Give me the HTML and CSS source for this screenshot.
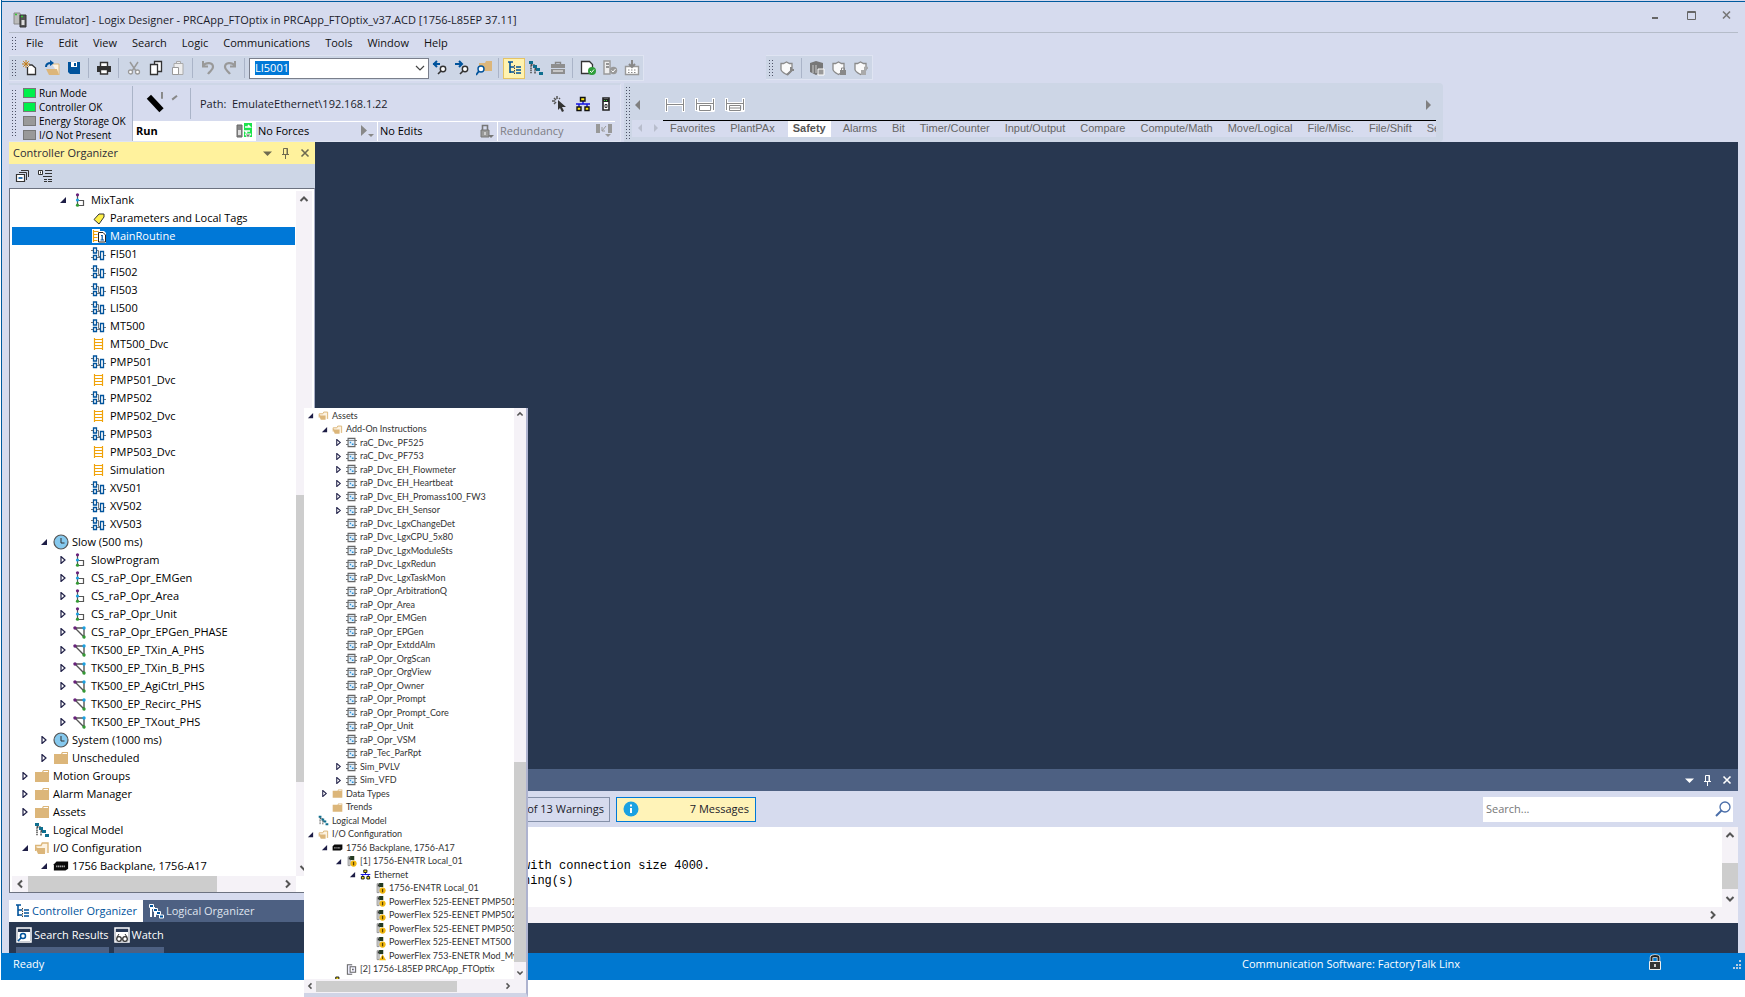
FILE: index.html
```html
<!DOCTYPE html>
<html lang="en">
<head>
<meta charset="utf-8">
<title>Logix Designer - PRCApp_FTOptix</title>
<link rel="stylesheet" href="styles.css">
</head>
<body>
<svg class="defs" aria-hidden="true">
  <symbol id="open" viewBox="0 0 8 8"><path d="M7 1v6H1z" fill="#1e1e46"/></symbol>
  <symbol id="shut" viewBox="0 0 8 8"><path d="M2 0.5v7L6 4z" fill="#fff" stroke="#1e1e46" stroke-width="1.2"/></symbol>
  <symbol id="prog" viewBox="0 0 16 16"><path d="M5.500 2v11M6 8.500h5.500v5H6" fill="none" stroke="#555" stroke-width="1.2"/><circle cx="5.500" cy="2.800" r="1.600" fill="#68217a"/><circle cx="5.500" cy="8" r="1.600" fill="#1ba1e2"/><circle cx="5.500" cy="13.200" r="1.600" fill="#339933"/></symbol>
  <symbol id="phase" viewBox="0 0 16 16"><path d="M3 4h9v9z" fill="none" stroke="#555" stroke-width="1.400"/><circle cx="3" cy="4" r="1.700" fill="#68217a"/><circle cx="12" cy="4" r="1.700" fill="#1ba1e2"/><circle cx="12" cy="13" r="1.700" fill="#339933"/></symbol>
  <symbol id="tag" viewBox="0 0 16 16"><path d="M3 9.500L8 4h5v3l-5 7z" fill="#fff04a" stroke="#333"/></symbol>
  <symbol id="fbd" viewBox="0 0 16 16"><path d="M0 4.500h2M0 11.500h2M6 4.500h1.500v6H9M6 11.500h3M13 9.500h2" stroke="#777" fill="none"/><path d="M2.500 2h3v5h-3zM2.500 9.500h3v4h-3zM9.500 5.500h3v8h-3z" fill="#fff" stroke="#00539c" stroke-width="1.300"/></symbol>
  <symbol id="lad" viewBox="0 0 16 16"><path d="M3.500 2v12M11.500 2v12M3.500 3.500h8M3.500 6.500h8M3.500 9.500h8M3.500 12.500h8" stroke="#f0a30a" fill="none" stroke-width="1.200"/></symbol>
  <symbol id="main" viewBox="0 0 16 16"><path d="M1 1h8v14H1zM7 3h6l2 2v10H7z" fill="#fff"/><path d="M2.500 2v12M2.500 3.500h5M2.500 6.500h4M2.500 9.500h4M2.500 12.500h4" stroke="#f0a30a" stroke-width="1.200"/><path d="M7.500 4.500h4.500l2.500 2.500v7h-7z" fill="#fff" stroke="#222"/><path d="M10 7.500h1.200V12M9.500 12h3.500" stroke="#00539c" fill="none" stroke-width="1.200"/></symbol>
  <symbol id="clock" viewBox="0 0 16 16"><circle cx="8" cy="8" r="7" fill="#86c9ee" stroke="#555" stroke-width="1.200"/><path d="M8 4v5h3.500" stroke="#333" fill="none"/></symbol>
  <symbol id="fold" viewBox="0 0 16 16"><path d="M1 4h7l1-2h6v12H1z" fill="#dcb67a"/><path d="M9.500 3.500h4.500" stroke="#fff"/></symbol>
  <symbol id="foldo" viewBox="0 0 16 16"><path d="M1.700 11V5.500H7l1.300-2.500H14V13" fill="#fdf3e2" stroke="#dcb67a" stroke-width="1.400"/><path d="M1 7l3 1h7v6H4z" fill="#dcb67a"/></symbol>
  <symbol id="model" viewBox="0 0 16 16"><path d="M3 3v11M3 5h4M7 7v7M7 9h4" stroke="#444" stroke-dasharray="1.500 .7" stroke-width="1.400" fill="none"/><path d="M1 1h4v3H1zM5 5h4v3H5zM8 8h4v3H8zM11 12h4v3h-4z" fill="#0f6f8f"/></symbol>
  <symbol id="modelw" viewBox="0 0 16 16"><path d="M3 3v11M3 5h4M7 7v7M7 9h4" stroke="#fff" stroke-width="2" fill="none"/><path d="M1.500 1.500h4v3h-4zM5.500 5.500h4v3h-4zM8.500 8.500h4v3h-4zM11.500 12h4v3h-4z" fill="#00539c" stroke="#fff"/></symbol>
  <symbol id="rack" viewBox="0 0 18 16"><path d="M4 3h13v8l-3 2H1V6z" fill="#0a0a0a"/><path d="M3.500 8.500h10" stroke="#aaa" stroke-width="2" stroke-dasharray="1.500 .6"/></symbol>
  <symbol id="aoi" viewBox="0 0 16 16"><path d="M0 5h16M0 11h16" stroke="#777" stroke-width="1.500"/><path d="M3 2h10v12H3z" fill="#e4f1fb" stroke="#666" stroke-width="1.600"/><path d="M3 5h10" stroke="#666"/><path d="M5.500 8h2M8.500 10.500h2.500" stroke="#2b8fd8" stroke-width="2"/></symbol>
  <symbol id="mod" viewBox="0 0 16 16"><path d="M3 1h3v13H3z" fill="#ddd" stroke="#777"/><path d="M6 0h6v6H6z" fill="#223a22"/><path d="M4 2h2v3H4z" fill="#333"/><circle cx="11" cy="11" r="4.500" fill="#f2b90f"/><path d="M11 8.500v5" stroke="#5b4300" stroke-width="1.800"/></symbol>
  <symbol id="modw" viewBox="0 0 16 16"><path d="M3 1h3v13H3z" fill="#ddd" stroke="#777"/><path d="M6 0h6v6H6z" fill="#223a22"/><path d="M4 2h2v3H4z" fill="#333"/><path d="M11 6l5 9H6z" fill="#f2b90f"/><path d="M11 9v4" stroke="#5b4300" stroke-width="1.500"/></symbol>
  <symbol id="cpu" viewBox="0 0 16 16"><path d="M9 1H2v14h7M6 4h8v8H6z" fill="#eef" stroke="#666" stroke-width="1.500"/><path d="M9 7h2v2H9z" fill="#444"/></symbol>
  <symbol id="net" viewBox="0 0 16 16"><path d="M8 5v3M1 8h14M4 8v3M12 8v3" stroke="#1414e0" stroke-width="1.400"/><path d="M5.500 1.500h4.500v3.500H5.500zM2 11h4v3.500H2zM10 11h4v3.500h-4z" fill="#ffe81a" stroke="#111" stroke-width="1.400"/></symbol>
  <symbol id="drop" viewBox="0 0 16 16"><path d="M4 6.500h9l-4.500 4.500z" fill="currentColor"/></symbol>
  <symbol id="pin" viewBox="0 0 16 16"><path d="M5.500 9V3.500h4V9M9 3v6M4 9.500h7M7.500 10v4" stroke="currentColor" fill="none"/></symbol>
  <symbol id="x" viewBox="0 0 16 16"><path d="M4.500 4.500l7 7M11.500 4.500l-7 7" stroke="currentColor" stroke-width="1.600"/></symbol>
  <symbol id="up" viewBox="0 0 16 16"><path d="M4.500 10L8 6.500l3.500 3.500" stroke="#555" fill="none" stroke-width="2"/></symbol>
  <symbol id="down" viewBox="0 0 16 16"><path d="M4.500 6L8 9.500 11.500 6" stroke="#555" fill="none" stroke-width="2"/></symbol>
  <symbol id="left" viewBox="0 0 16 16"><path d="M10 4.500L6.500 8l3.500 3.500" stroke="#555" fill="none" stroke-width="2"/></symbol>
  <symbol id="right" viewBox="0 0 16 16"><path d="M6 4.500L9.500 8 6 11.500" stroke="#555" fill="none" stroke-width="2"/></symbol>
  <symbol id="shield" viewBox="0 0 16 16"><path d="M2 3.500h2.500L7.500 2l3 1.500H13v6c0 2-3 3.500-5.500 5C5 13 2 11.500 2 9.500z" fill="#fafafa" stroke="#8a8a8a" stroke-width="1.300"/></symbol>
  <symbol id="ctree" viewBox="0 0 16 16"><path d="M2 2h5M4 2v11M4 7h4M4 12h4" stroke="#00539c" stroke-width="1.600" fill="none"/><path d="M8.500 5v9" stroke="#444" stroke-dasharray="1.500 1"/><path d="M10 7h5M10 10h5M10 13h5" stroke="#00539c" stroke-width="1.600"/></symbol>
</svg>

<div class="window">
  <header class="titlebar">
    <svg class="i16" viewBox="0 0 16 16"><path d="M2 1h6v11H2z" fill="#bbb" stroke="#888"/><path d="M8 3h6v12H8z" fill="#555" stroke="#333"/><path d="M9 4.500h2M3 2.500h2" stroke="#36c936" stroke-width="1.500"/><path d="M9.500 8h3v5h-3z" fill="#ddd"/></svg>
    <h1>[Emulator] - Logix Designer - PRCApp_FTOptix in PRCApp_FTOptix_v37.ACD [1756-L85EP 37.11]</h1>
    <div class="winbtns">
      <button aria-label="Minimize"><svg class="i16" viewBox="0 0 16 16"><path d="M5 11h6" stroke="#666" stroke-width="2"/></svg></button>
      <button aria-label="Maximize"><svg class="i16" viewBox="0 0 16 16"><path d="M4.500 4.500h8v8h-8zM4 5.500h9" stroke="#666" fill="none"/></svg></button>
      <button aria-label="Close"><svg class="i16" viewBox="0 0 16 16"><path d="M4 4.500l7 7M11 4.500l-7 7" stroke="#777" stroke-width="1.600"/></svg></button>
    </div>
  </header>

  <nav class="menubar"><span class="grip"></span>
    <button>File</button><button>Edit</button><button>View</button><button>Search</button><button>Logic</button><button>Communications</button><button>Tools</button><button>Window</button><button>Help</button>
  </nav>

  <div class="toolrow">
    <div class="toolbar">
      <span class="grip"></span>
      <button aria-label="New"><svg class="i16" viewBox="0 0 16 16"><path d="M5.500 7v7.500h8V8L10 5H7" fill="#fff" stroke="#333" stroke-width="1.300"/><path d="M4 0v8M0 4h8M1.200 1.200l5.600 5.600M6.800 1.200L1.200 6.800" stroke="#c27d1a"/></svg></button>
      <button aria-label="Open"><svg class="i16" viewBox="0 0 16 16"><path d="M8 4h7v11" fill="#fdf3e2" stroke="#dcb67a"/><path d="M2 9h3l1 0h7l2 6H5z" fill="#dcb67a"/><path d="M2 7c0-4 3-4 5-4" stroke="#00539c" stroke-width="2" fill="none"/><path d="M6 0l4 3-4 3z" fill="#00539c"/></svg></button>
      <button aria-label="Save"><svg class="i16" viewBox="0 0 16 16"><path d="M2 2h12v12H4l-2-2z" fill="#00539c"/><path d="M5 2h6v5H5z" fill="#fff"/><path d="M8 3h2v3H8z" fill="#00539c"/></svg></button>
      <span class="sep"></span>
      <button aria-label="Print"><svg class="i16" viewBox="0 0 16 16"><path d="M4.500 6V2.500h7V6" fill="#fff" stroke="#333" stroke-width="1.400"/><path d="M1 6h14v6H1z" fill="#333"/><path d="M4.500 9.500h7v4.500h-7z" fill="#fff" stroke="#333" stroke-width="1.400"/></svg></button>
      <span class="sep"></span>
      <button aria-label="Cut"><svg class="i16" viewBox="0 0 16 16"><path d="M4 2l6 9M12 2l-6 9" stroke="#999" stroke-width="1.500"/><circle cx="4.500" cy="12" r="2" fill="#fff" stroke="#999" stroke-width="1.300"/><circle cx="11.500" cy="12" r="2" fill="#fff" stroke="#999" stroke-width="1.300"/></svg></button>
      <button aria-label="Copy"><svg class="i16" viewBox="0 0 16 16"><path d="M6.500 1.500h7v10h-7z" fill="#fff" stroke="#333" stroke-width="1.300"/><path d="M2.500 4.500h7v10h-7z" fill="#fff" stroke="#333" stroke-width="1.300"/></svg></button>
      <button aria-label="Paste"><svg class="i16" viewBox="0 0 16 16"><path d="M4 3.500h9v11H4zM6.500 3V1.500h4V3" fill="#eee" stroke="#aaa"/><path d="M2.500 7.500h6v7h-6z" fill="#fff" stroke="#999"/></svg></button>
      <span class="sep"></span>
      <button aria-label="Undo"><svg class="i16" viewBox="0 0 16 16"><path d="M3 6c3-4 10-4 10 1 0 3-3 4-5 7" stroke="#999" stroke-width="2.200" fill="none"/><path d="M3 1v5.500h5" stroke="#999" stroke-width="2" fill="none"/></svg></button>
      <button aria-label="Redo"><svg class="i16" viewBox="0 0 16 16"><path d="M13 6C10 2 3 2 3 7c0 3 3 4 5 7" stroke="#999" stroke-width="2.200" fill="none"/><path d="M13 1v5.500H8" stroke="#999" stroke-width="2" fill="none"/></svg></button>
      <span class="sep"></span>
      <div class="combo"><span class="sel">LI5001</span><svg class="i16" viewBox="0 0 16 16"><path d="M4 6l4 4 4-4" stroke="#444" fill="none" stroke-width="1.200"/></svg></div>
      <button aria-label="Find previous"><svg class="i16" viewBox="0 0 16 16"><path d="M1 4h7M5 1L2 4l3 3" stroke="#00539c" stroke-width="2" fill="none"/><circle cx="11" cy="9" r="2.700" fill="#fff" stroke="#333" stroke-width="1.400"/><path d="M9 11l-3 3" stroke="#333" stroke-width="1.600"/></svg></button>
      <button aria-label="Find next"><svg class="i16" viewBox="0 0 16 16"><path d="M1 4h7M5 1l3 3-3 3" stroke="#00539c" stroke-width="2" fill="none"/><circle cx="11" cy="9" r="2.700" fill="#fff" stroke="#333" stroke-width="1.400"/><path d="M9 11l-3 3" stroke="#333" stroke-width="1.600"/></svg></button>
      <button aria-label="Browse"><svg class="i16" viewBox="0 0 16 16"><path d="M3 3h6l1-2h6v10H3z" fill="#dcb67a"/><circle cx="5" cy="9" r="3" fill="#fff" stroke="#00539c" stroke-width="1.400"/><path d="M3 11l-3 4" stroke="#00539c" stroke-width="1.800"/></svg></button>
      <span class="sep"></span>
      <button class="on" aria-label="Controller Organizer"><svg class="i16"><use href="#ctree"/></svg></button>
      <button aria-label="Logical Organizer"><svg class="i16"><use href="#model"/></svg></button>
      <button aria-label="Toolbox"><svg class="i16" viewBox="0 0 16 16"><path d="M5.500 4V2.500h5V4" fill="none" stroke="#888" stroke-width="1.400"/><path d="M1 4h14v4H1zM1 9h14v5H1z" fill="#8e8e8e"/><path d="M3 11h10" stroke="#fff"/></svg></button>
      <span class="sep"></span>
      <button aria-label="Verify"><svg class="i16" viewBox="0 0 16 16"><path d="M1.500 1.500h8l3 3v9h-11z" fill="#fff" stroke="#333" stroke-width="1.300"/><circle cx="12" cy="11" r="4" fill="#2f9e3a"/><path d="M10 11l1.500 1.500L14 9.500" stroke="#fff" fill="none"/></svg></button>
      <button aria-label="Verify controller"><svg class="i16" viewBox="0 0 16 16"><path d="M2 1h6v13H2z" fill="#eee" stroke="#999" stroke-width="1.400"/><path d="M4 4h3M4 7h3" stroke="#777" stroke-width="1.500"/><circle cx="11.500" cy="10.500" r="3.700" fill="#999"/><path d="M9.500 10.500l1.500 1.500 2.500-3" stroke="#fff" fill="none"/></svg></button>
      <button aria-label="Build"><svg class="i16" viewBox="0 0 16 16"><path d="M1.500 6.500h13v8h-13z" fill="#fff" stroke="#999" stroke-width="1.400"/><path d="M8 0v7M5 4l3 3 3-3" stroke="#888" stroke-width="2" fill="none"/><path d="M4 10h8M4 12.500h8" stroke="#888" stroke-dasharray="1.500 1.500"/></svg></button>
    </div>
    <div class="toolbar safety">
      <span class="grip"></span>
      <button aria-label="Safety configure"><svg class="i16"><use href="#shield"/><path d="M8 15l5-5M12 7v3h3" stroke="#888" stroke-width="2" fill="none"/></svg></button>
      <span class="sep"></span>
      <button aria-label="Safety signature"><svg class="i16"><path d="M1 3l6-2 7 2v9l-7 3-6-3z" fill="#777"/><path d="M4 5v8M7 5v8" stroke="#ccc"/><path d="M9 9h6v6H9z" fill="#999" stroke="#fff"/></svg></button>
      <button aria-label="Safety lock"><svg class="i16"><use href="#shield"/><path d="M10.500 10V8h3v2" fill="none" stroke="#888"/><path d="M9 10h6v5H9z" fill="#888"/></svg></button>
      <button aria-label="Safety unlock"><svg class="i16"><use href="#shield"/><path d="M11.500 10V7h3v2" fill="none" stroke="#aaa"/><path d="M8 10h5v5H8z" fill="#aaa"/></svg></button>
    </div>
  </div>

  <div class="statusrow">
    <section class="online">
      <span class="grip"></span>
      <ul class="leds"><li class="g">Run Mode</li><li class="g">Controller OK</li><li>Energy Storage OK</li><li>I/O Not Present</li></ul>
      <div class="path-area">
        <div class="path-top">
          <svg class="key" viewBox="0 0 54 32"><path d="M14 9l13 14" stroke="#000" stroke-width="6"/><path d="M27.500 4v7" stroke="#888" stroke-width="2"/><path d="M38 12l5-4" stroke="#888" stroke-width="2"/></svg>
          <span class="path">Path: &nbsp;EmulateEthernet\192.168.1.22</span>
          <button aria-label="Who Active"><svg class="i16" viewBox="0 0 16 16"><path d="M6 4l8 7H10l2 4-2 1-2-4-2 2z" fill="#333"/><path d="M5 0v3M0 5h3M2 2l2 2M8 2L7 3M2 8l2-2" stroke="#555" stroke-width="1.500"/></svg></button>
          <button aria-label="Network"><svg class="i16"><use href="#net"/></svg></button>
          <button aria-label="Module"><svg class="i16" viewBox="0 0 16 16"><path d="M5 2h6v12H5z" fill="#fff" stroke="#222" stroke-width="1.600"/><path d="M5 3h6v3H5z" fill="#222"/><path d="M6 4.500h4" stroke="#35d435" stroke-dasharray="1 1"/><path d="M7 8.500h2v3H7z" fill="#fff" stroke="#333"/></svg></button>
        </div>
        <div class="cells">
          <div class="cell run"><b>Run</b><svg class="i16" viewBox="0 0 16 16"><path d="M1 2h5v12H1z" fill="#888" stroke="#666"/><path d="M2 7h3v5H2z" fill="#ddd"/><path d="M8 0h8v14H8z" fill="#1ce34c"/><path d="M9 4h5l-2-2M14 8H9l2 2" stroke="#fff" stroke-width="1.500" fill="none"/><path d="M9 11h6l-3 4z" fill="#777" stroke="#fff"/></svg></div>
          <div class="cell">No Forces<svg class="i16" viewBox="0 0 16 16"><path d="M3 2v11l6-5.500z" fill="#888"/><path d="M10 11h6l-3 3z" fill="#888"/></svg></div>
          <div class="cell">No Edits<svg class="i16" viewBox="0 0 16 16"><path d="M4.500 7V2.500h5V7" fill="none" stroke="#777" stroke-width="1.600"/><path d="M3 7h8v7H3z" fill="#999" stroke="#777"/><path d="M7 9v3" stroke="#fff"/><path d="M10 12h6l-3 3z" fill="#777"/></svg></div>
          <div class="cell dim">Redundancy<svg class="i16" viewBox="0 0 16 16"><path d="M0 1h4v9H0zM12 1h4v9h-4z" fill="#999"/><path d="M6 8l4-5M6 4v4h3" stroke="#999" fill="none"/><path d="M9 11h6l-3 3z" fill="#999"/></svg></div>
        </div>
      </div>
    </section>
    <section class="palette">
      <span class="grip"></span>
      <div class="pal-main">
        <div class="pal-top">
          <svg class="i16" viewBox="0 0 16 16"><path d="M10 3v10L5 8z" fill="#808080"/></svg>
          <span class="instr">
            <svg viewBox="0 0 20 16"><path d="M1.500 1v14M18.500 1v14M2 7.500h16" stroke="#fff" stroke-width="3"/><path d="M1.500 2v12M18.500 2v12M2 7.500h16" stroke="#888"/></svg>
            <svg viewBox="0 0 20 16"><path d="M1.500 1v13M18.500 1v13M2 6.500h16v7H4V8" stroke="#fff" stroke-width="3" fill="none"/><path d="M1.500 2v11M18.500 2v11M2 6.500h16M4.500 8.500h11v5h-11z" stroke="#888" fill="#fff"/></svg>
            <svg viewBox="0 0 20 16"><path d="M1.500 1v13M18.500 1v13M2 6.500h16v7H4V8" stroke="#fff" stroke-width="3" fill="none"/><path d="M1.500 2v11M18.500 2v11M2 6.500h16M4.500 8.500h11v5h-11zM4 11h12" stroke="#888" fill="#fff"/></svg>
          </span>
          <svg class="i16" viewBox="0 0 16 16"><path d="M6 3v10l5-5z" fill="#808080"/></svg>
        </div>
        <div class="pal-tabs">
          <span class="arrows"><svg class="i16" viewBox="0 0 16 16"><path d="M10 4v8L6 8z" fill="#b8bdcc"/></svg><svg class="i16" viewBox="0 0 16 16"><path d="M6 4v8l4-4z" fill="#b8bdcc"/></svg></span>
          <div class="tabs"><button>Favorites</button><button>PlantPAx</button><button class="on">Safety</button><button>Alarms</button><button>Bit</button><button>Timer/Counter</button><button>Input/Output</button><button>Compare</button><button>Compute/Math</button><button>Move/Logical</button><button>File/Misc.</button><button>File/Shift</button><button class="last">Se</button></div>
        </div>
      </div>
    </section>
  </div>

  <main class="work">
    <aside class="organizer">
      <div class="org-head"><h2>Controller Organizer</h2><svg class="i16"><use href="#drop"/></svg><svg class="i16"><use href="#pin"/></svg><svg class="i16"><use href="#x"/></svg></div>
      <div class="org-tools">
        <button aria-label="Collapse all"><svg class="i16" viewBox="0 0 16 16"><path d="M6 2.500h7.500V9M4 4.500h7.500V12" stroke="#333" fill="none"/><path d="M1.500 6.500h8v7h-8z" fill="#fff" stroke="#333" stroke-width="1.200"/><path d="M3.500 10h4" stroke="#00539c" stroke-width="1.600"/></svg></button>
        <button aria-label="Properties"><svg class="i16" viewBox="0 0 16 16"><path d="M1.500 2.500h4v4h-4z" fill="#fff" stroke="#333"/><path d="M3.500 3.500v2" stroke="#333"/><path d="M8 2.500h7M8 5.500h7M6 8.500h9M7 11.500h3M7 13.500h3M11 11.500h4M11 13.500h4" stroke="#333"/></svg></button>
      </div>
      <div class="org-box">
        <div class="org-view">
          <ul class="tree">
            <li class="l3"><svg class="a"><use href="#open"/></svg><svg class="i"><use href="#prog"/></svg>MixTank</li>
            <li class="l4"><svg class="a"></svg><svg class="i"><use href="#tag"/></svg>Parameters and Local Tags</li>
            <li class="l4 sel"><svg class="a"></svg><svg class="i"><use href="#main"/></svg>MainRoutine</li>
            <li class="l4"><svg class="a"></svg><svg class="i"><use href="#fbd"/></svg>FI501</li>
            <li class="l4"><svg class="a"></svg><svg class="i"><use href="#fbd"/></svg>FI502</li>
            <li class="l4"><svg class="a"></svg><svg class="i"><use href="#fbd"/></svg>FI503</li>
            <li class="l4"><svg class="a"></svg><svg class="i"><use href="#fbd"/></svg>LI500</li>
            <li class="l4"><svg class="a"></svg><svg class="i"><use href="#fbd"/></svg>MT500</li>
            <li class="l4"><svg class="a"></svg><svg class="i"><use href="#lad"/></svg>MT500_Dvc</li>
            <li class="l4"><svg class="a"></svg><svg class="i"><use href="#fbd"/></svg>PMP501</li>
            <li class="l4"><svg class="a"></svg><svg class="i"><use href="#lad"/></svg>PMP501_Dvc</li>
            <li class="l4"><svg class="a"></svg><svg class="i"><use href="#fbd"/></svg>PMP502</li>
            <li class="l4"><svg class="a"></svg><svg class="i"><use href="#lad"/></svg>PMP502_Dvc</li>
            <li class="l4"><svg class="a"></svg><svg class="i"><use href="#fbd"/></svg>PMP503</li>
            <li class="l4"><svg class="a"></svg><svg class="i"><use href="#lad"/></svg>PMP503_Dvc</li>
            <li class="l4"><svg class="a"></svg><svg class="i"><use href="#lad"/></svg>Simulation</li>
            <li class="l4"><svg class="a"></svg><svg class="i"><use href="#fbd"/></svg>XV501</li>
            <li class="l4"><svg class="a"></svg><svg class="i"><use href="#fbd"/></svg>XV502</li>
            <li class="l4"><svg class="a"></svg><svg class="i"><use href="#fbd"/></svg>XV503</li>
            <li class="l2"><svg class="a"><use href="#open"/></svg><svg class="i"><use href="#clock"/></svg>Slow (500 ms)</li>
            <li class="l3"><svg class="a"><use href="#shut"/></svg><svg class="i"><use href="#prog"/></svg>SlowProgram</li>
            <li class="l3"><svg class="a"><use href="#shut"/></svg><svg class="i"><use href="#prog"/></svg>CS_raP_Opr_EMGen</li>
            <li class="l3"><svg class="a"><use href="#shut"/></svg><svg class="i"><use href="#prog"/></svg>CS_raP_Opr_Area</li>
            <li class="l3"><svg class="a"><use href="#shut"/></svg><svg class="i"><use href="#prog"/></svg>CS_raP_Opr_Unit</li>
            <li class="l3"><svg class="a"><use href="#shut"/></svg><svg class="i"><use href="#phase"/></svg>CS_raP_Opr_EPGen_PHASE</li>
            <li class="l3"><svg class="a"><use href="#shut"/></svg><svg class="i"><use href="#phase"/></svg>TK500_EP_TXin_A_PHS</li>
            <li class="l3"><svg class="a"><use href="#shut"/></svg><svg class="i"><use href="#phase"/></svg>TK500_EP_TXin_B_PHS</li>
            <li class="l3"><svg class="a"><use href="#shut"/></svg><svg class="i"><use href="#phase"/></svg>TK500_EP_AgiCtrl_PHS</li>
            <li class="l3"><svg class="a"><use href="#shut"/></svg><svg class="i"><use href="#phase"/></svg>TK500_EP_Recirc_PHS</li>
            <li class="l3"><svg class="a"><use href="#shut"/></svg><svg class="i"><use href="#phase"/></svg>TK500_EP_TXout_PHS</li>
            <li class="l2"><svg class="a"><use href="#shut"/></svg><svg class="i"><use href="#clock"/></svg>System (1000 ms)</li>
            <li class="l2"><svg class="a"><use href="#shut"/></svg><svg class="i"><use href="#fold"/></svg>Unscheduled</li>
            <li class="l1"><svg class="a"><use href="#shut"/></svg><svg class="i"><use href="#fold"/></svg>Motion Groups</li>
            <li class="l1"><svg class="a"><use href="#shut"/></svg><svg class="i"><use href="#fold"/></svg>Alarm Manager</li>
            <li class="l1"><svg class="a"><use href="#shut"/></svg><svg class="i"><use href="#fold"/></svg>Assets</li>
            <li class="l1"><svg class="a"></svg><svg class="i"><use href="#model"/></svg>Logical Model</li>
            <li class="l1"><svg class="a"><use href="#open"/></svg><svg class="i"><use href="#foldo"/></svg>I/O Configuration</li>
            <li class="l2"><svg class="a"><use href="#open"/></svg><svg class="i"><use href="#rack"/></svg>1756 Backplane, 1756-A17</li>
          </ul>
          <div class="vbar"><svg class="i16"><use href="#up"/></svg><span class="track"><span class="thumb"></span></span><svg class="i16"><use href="#down"/></svg></div>
        </div>
        <div class="hbar"><svg class="i16"><use href="#left"/></svg><span class="track"><span class="thumb"></span></span><svg class="i16"><use href="#right"/></svg></div>
      </div>
      <div class="org-tabs"><button class="on"><svg class="i16"><use href="#ctree"/></svg>Controller Organizer</button><button><svg class="i16"><use href="#modelw"/></svg>Logical Organizer</button></div>
    </aside>
    <section class="desk">
      <div class="canvas"></div>
      <div class="out-head"><svg class="i16"><use href="#drop"/></svg><svg class="i16"><use href="#pin"/></svg><svg class="i16"><use href="#x"/></svg></div>
      <div class="out-tools">
        <button class="warn">0 of 13 Warnings</button>
        <button class="msgs"><svg class="i16" viewBox="0 0 16 16"><circle cx="8" cy="8" r="7.500" fill="#1ba1e2"/><path d="M8 7v5M8 3.500v2" stroke="#fff" stroke-width="2"/></svg>7 Messages</button>
        <label class="search"><input type="text" placeholder="Search..." aria-label="Search"><svg class="i16" viewBox="0 0 16 16"><circle cx="10" cy="6" r="5" fill="#fff" stroke="#4a6ea9" stroke-width="1.300"/><path d="M6.500 9.500L1 15" stroke="#4a6ea9" stroke-width="2"/></svg></label>
      </div>
      <div class="log">
        <div class="log-row">
          <pre>with connection size 4000.
ning(s)</pre>
          <div class="vbar"><svg class="i16"><use href="#up"/></svg><span class="track"><span class="thumb"></span></span><svg class="i16"><use href="#down"/></svg></div>
        </div>
        <div class="log-h"><svg class="i16"><use href="#right"/></svg></div>
      </div>
    </section>
  </main>
  <div class="docks">
    <button><svg class="i16" viewBox="0 0 16 16"><path d="M1 1h14v14H1z" fill="#293955" stroke="#fff" stroke-width="1.500"/><path d="M2 5h12v9H2z" fill="#fff"/><circle cx="7" cy="9" r="2.500" fill="#fff" stroke="#00539c" stroke-width="1.500"/><path d="M5 11l-3 3" stroke="#00539c" stroke-width="1.700"/></svg>Search Results</button>
    <button><svg class="i16" viewBox="0 0 16 16"><path d="M1 1h14v14H1z" fill="#293955" stroke="#fff" stroke-width="1.500"/><path d="M2 5h12v9H2z" fill="#fff"/><circle cx="5" cy="12" r="2.300" fill="#fff" stroke="#333" stroke-width="1.300"/><circle cx="11" cy="12" r="2.300" fill="#fff" stroke="#333" stroke-width="1.300"/><path d="M3 10l2-3M13 10l-2-3" stroke="#333"/></svg>Watch</button>
  </div>
  <footer class="statusbar"><span>Ready</span><span class="comm">Communication Software: FactoryTalk Linx</span>
    <svg class="i16 lock" viewBox="0 0 16 16"><path d="M4.500 8V3.500c0-2 7-2 7 0V8" fill="none" stroke="#ddd" stroke-width="3.500"/><path d="M4.500 8V3.500c0-2 7-2 7 0V8" fill="none" stroke="#222" stroke-width="1.800"/><path d="M2.500 7.500h11v8h-11z" fill="#333" stroke="#eee"/><path d="M8 10v3" stroke="#fff" stroke-width="1.500"/></svg>
    <svg class="i16" viewBox="0 0 16 16"><path d="M11 4h2v2h-2zM11 8h2v2h-2zM8 8h2v2H8zM11 11h2v2h-2zM8 11h2v2H8zM5 11h2v2H5z" fill="#b8cbe0"/></svg>
  </footer>
</div>

<aside class="float">
  <div class="float-view">
    <div class="float-rows">
    <ul class="tree small">
      <li class="l1"><svg class="a"><use href="#open"/></svg><svg class="i"><use href="#foldo"/></svg>Assets</li>
      <li class="l2"><svg class="a"><use href="#open"/></svg><svg class="i"><use href="#foldo"/></svg>Add-On Instructions</li>
      <li class="l3"><svg class="a"><use href="#shut"/></svg><svg class="i"><use href="#aoi"/></svg>raC_Dvc_PF525</li>
      <li class="l3"><svg class="a"><use href="#shut"/></svg><svg class="i"><use href="#aoi"/></svg>raC_Dvc_PF753</li>
      <li class="l3"><svg class="a"><use href="#shut"/></svg><svg class="i"><use href="#aoi"/></svg>raP_Dvc_EH_Flowmeter</li>
      <li class="l3"><svg class="a"><use href="#shut"/></svg><svg class="i"><use href="#aoi"/></svg>raP_Dvc_EH_Heartbeat</li>
      <li class="l3"><svg class="a"><use href="#shut"/></svg><svg class="i"><use href="#aoi"/></svg>raP_Dvc_EH_Promass100_FW3</li>
      <li class="l3"><svg class="a"><use href="#shut"/></svg><svg class="i"><use href="#aoi"/></svg>raP_Dvc_EH_Sensor</li>
      <li class="l3"><svg class="a"></svg><svg class="i"><use href="#aoi"/></svg>raP_Dvc_LgxChangeDet</li>
      <li class="l3"><svg class="a"></svg><svg class="i"><use href="#aoi"/></svg>raP_Dvc_LgxCPU_5x80</li>
      <li class="l3"><svg class="a"></svg><svg class="i"><use href="#aoi"/></svg>raP_Dvc_LgxModuleSts</li>
      <li class="l3"><svg class="a"></svg><svg class="i"><use href="#aoi"/></svg>raP_Dvc_LgxRedun</li>
      <li class="l3"><svg class="a"></svg><svg class="i"><use href="#aoi"/></svg>raP_Dvc_LgxTaskMon</li>
      <li class="l3"><svg class="a"></svg><svg class="i"><use href="#aoi"/></svg>raP_Opr_ArbitrationQ</li>
      <li class="l3"><svg class="a"></svg><svg class="i"><use href="#aoi"/></svg>raP_Opr_Area</li>
      <li class="l3"><svg class="a"></svg><svg class="i"><use href="#aoi"/></svg>raP_Opr_EMGen</li>
      <li class="l3"><svg class="a"></svg><svg class="i"><use href="#aoi"/></svg>raP_Opr_EPGen</li>
      <li class="l3"><svg class="a"></svg><svg class="i"><use href="#aoi"/></svg>raP_Opr_ExtddAlm</li>
      <li class="l3"><svg class="a"></svg><svg class="i"><use href="#aoi"/></svg>raP_Opr_OrgScan</li>
      <li class="l3"><svg class="a"></svg><svg class="i"><use href="#aoi"/></svg>raP_Opr_OrgView</li>
      <li class="l3"><svg class="a"></svg><svg class="i"><use href="#aoi"/></svg>raP_Opr_Owner</li>
      <li class="l3"><svg class="a"></svg><svg class="i"><use href="#aoi"/></svg>raP_Opr_Prompt</li>
      <li class="l3"><svg class="a"></svg><svg class="i"><use href="#aoi"/></svg>raP_Opr_Prompt_Core</li>
      <li class="l3"><svg class="a"></svg><svg class="i"><use href="#aoi"/></svg>raP_Opr_Unit</li>
      <li class="l3"><svg class="a"></svg><svg class="i"><use href="#aoi"/></svg>raP_Opr_VSM</li>
      <li class="l3"><svg class="a"></svg><svg class="i"><use href="#aoi"/></svg>raP_Tec_ParRpt</li>
      <li class="l3"><svg class="a"><use href="#shut"/></svg><svg class="i"><use href="#aoi"/></svg>Sim_PVLV</li>
      <li class="l3"><svg class="a"><use href="#shut"/></svg><svg class="i"><use href="#aoi"/></svg>Sim_VFD</li>
      <li class="l2"><svg class="a"><use href="#shut"/></svg><svg class="i"><use href="#fold"/></svg>Data Types</li>
      <li class="l2"><svg class="a"></svg><svg class="i"><use href="#fold"/></svg>Trends</li>
      <li class="l1"><svg class="a"></svg><svg class="i"><use href="#model"/></svg>Logical Model</li>
      <li class="l1"><svg class="a"><use href="#open"/></svg><svg class="i"><use href="#foldo"/></svg>I/O Configuration</li>
      <li class="l2"><svg class="a"><use href="#open"/></svg><svg class="i"><use href="#rack"/></svg>1756 Backplane, 1756-A17</li>
      <li class="l3"><svg class="a"><use href="#open"/></svg><svg class="i"><use href="#mod"/></svg>[1] 1756-EN4TR Local_01</li>
      <li class="l4"><svg class="a"><use href="#open"/></svg><svg class="i"><use href="#net"/></svg>Ethernet</li>
      <li class="l5"><svg class="a"></svg><svg class="i"><use href="#mod"/></svg>1756-EN4TR Local_01</li>
      <li class="l5"><svg class="a"></svg><svg class="i"><use href="#mod"/></svg>PowerFlex 525-EENET PMP501</li>
      <li class="l5"><svg class="a"></svg><svg class="i"><use href="#mod"/></svg>PowerFlex 525-EENET PMP502</li>
      <li class="l5"><svg class="a"></svg><svg class="i"><use href="#mod"/></svg>PowerFlex 525-EENET PMP503</li>
      <li class="l5"><svg class="a"></svg><svg class="i"><use href="#mod"/></svg>PowerFlex 525-EENET MT500</li>
      <li class="l5"><svg class="a"></svg><svg class="i"><use href="#modw"/></svg>PowerFlex 753-ENETR Mod_MyD</li>
      <li class="l3"><svg class="a"></svg><svg class="i"><use href="#cpu"/></svg>[2] 1756-L85EP PRCApp_FTOptix</li>
    </ul>
    <div class="more"><svg class="i"><use href="#net"/></svg></div>
    </div>
    <div class="vbar"><svg class="i12"><use href="#up"/></svg><span class="track"><span class="thumb"></span></span><svg class="i12"><use href="#down"/></svg></div>
  </div>
  <div class="hbar"><svg class="i12"><use href="#left"/></svg><span class="track"><span class="thumb"></span></span><svg class="i12"><use href="#right"/></svg></div>
</aside>
</body>
</html>
```
FILE: styles.css
```css
* { box-sizing: border-box; }
body { margin: 0; background: #fff; font: 11px/16px "Open Sans", "Noto Sans", sans-serif; color: #1b1b2b; position: relative; height: 100vh; overflow: hidden; }
button { font: inherit; color: inherit; background: none; border: 0; padding: 0; margin: 0; display: inline-flex; align-items: center; justify-content: center; white-space: nowrap; flex: none; }
ul { list-style: none; margin: 0; padding: 0; }
h1, h2 { font-size: 11px; font-weight: 400; margin: 0; }
svg { display: block; flex: none; }
.defs { position: absolute; width: 0; height: 0; }
.i16 { width: 16px; height: 16px; }
.i12 { width: 12px; height: 12px; }
.window { height: calc(100vh - 17px); margin-left: 1px; border-left: 1px solid #005a9e; background: #d6dbee; display: flex; flex-direction: column; padding-top: 1px; }
.titlebar { border-top: 1px solid #005a9e; height: 31px; display: flex; align-items: center; padding-left: 10px; padding-top: 5px; flex: none; }
.titlebar h1 { margin-left: 7px; flex: 1; }
.winbtns { display: flex; gap: 20px; padding-right: 10px; align-self: flex-start; }
.menubar { margin: 0 7px; height: 23px; padding-bottom: 2px; border-top: 1px solid #b5bcc9; display: flex; align-items: center; gap: 15px; color: #111; flex: none; }
.grip { width: 5px; align-self: stretch; margin: 3px 2px; flex: none; background: radial-gradient(circle, #4d5266 30%, transparent 45%) 0 0 / 3px 3px; }
.menubar .grip { margin-right: -5px; }
.toolrow { display: flex; justify-content: flex-start; height: 28px; flex: none; padding-left: 7px; gap: 122px; }
.toolbar { background: #cdd6e6; display: flex; align-items: center; height: 26px; border: 1px solid #dfe4f2; border-left: 0; gap: 6px; padding-right: 3px; }
.toolbar .grip { margin-right: 0; }
.toolbar .sep { width: 2px; height: 20px; border-left: 1px solid #aab4c8; }
.toolbar button.on { background: #fff3b0; border: 1px solid #e5c365; width: 22px; height: 21px; margin: 0 -3px; }
.safety { height: 25px; }
.combo { width: 180px; height: 21px; background: #fff; border: 1px solid #7a7f8c; display: flex; align-items: center; justify-content: space-between; padding: 0 0 0 5px; margin: 0 -3px 0 -3px; }
.combo .sel { background: #0078d7; color: #fff; line-height: 14px; }
.statusrow { display: flex; height: 59px; flex: none; padding-left: 7px; }
.online { display: flex; width: 612px; border: 1px solid #dfe4f2; border-top: 2px solid #cdd6e6; border-left: 0; padding-top: 1px; }
.leds { width: 110px; margin-left: 5px; font-size: 10px; color: #000; border-right: 1px solid #aab4c8; }
.leds li { height: 14px; line-height: 14px; display: flex; align-items: center; gap: 3px; white-space: nowrap; }
.leds li::before { content: ""; flex: none; width: 11px; height: 8px; background: #999; border: 1px solid #777; }
.leds li.g::before { background: #00f04c; }
.path-area { flex: 1; display: flex; flex-direction: column; min-width: 0; }
.path-top { flex: 1; display: flex; align-items: center; gap: 7px; padding-right: 6px; }
.key { width: 58px; height: 31px; border-right: 1px solid #aab4c8; }
.path { flex: 1; margin-left: 2px; white-space: nowrap; }
.cells { height: 20px; display: grid; grid-template-columns: 122px 122px 120px 118px; color: #000; }
.cell { display: flex; align-items: center; justify-content: space-between; border-top: 1px solid #fff; border-left: 1px solid #fff; padding: 0 3px 2px 2px; white-space: nowrap; }
.cell.run { background: #fff; }
.cell.dim { color: #7d7d85; }
.palette { display: flex; width: 819px; background: #cdd6e6; border-radius: 0 4px 4px 0; margin-left: 3px; min-width: 0; }
.palette .grip { margin-left: 1px; }
.pal-main { flex: 1; min-width: 0; display: flex; flex-direction: column; padding-right: 7px; }
.pal-top { height: 37px; padding-top: 7px; display: flex; align-items: center; }
.pal-top > .i16:first-child { margin-left: -2px; }
.instr { display: flex; gap: 10px; flex: 1; padding-left: 19px; }
.instr svg { width: 20px; height: 16px; }
.pal-tabs { display: flex; background: #d6dbee; height: 17px; font: 11px/14px "Liberation Sans", sans-serif; color: #666; }
.arrows { display: flex; width: 31px; }
.tabs { flex: 1; display: flex; overflow: hidden; border-top: 1px solid #000; }
.tabs button { padding: 0 8px 3px 7px; height: 16px; }
.tabs button.on { background: #fff; font-weight: 700; color: #555; margin: 0 5px; padding: 0 5px 3px; }
.tabs .last { padding: 0 0 3px 7px; }
.work { flex: 1; min-height: 0; display: flex; margin: 0 7px; background: #283750; }
.organizer { width: 306px; display: flex; flex-direction: column; flex: none; }
.org-head { height: 22px; background: #fff29d; display: flex; align-items: center; padding: 0 2px 0 4px; gap: 3px; color: #6e6a50; flex: none; }
.org-head h2 { flex: 1; color: #2d2d38; }
.org-tools { height: 24px; background: #cdd6e6; display: flex; align-items: center; padding-left: 6px; gap: 6px; flex: none; }
.org-box { flex: 1; min-height: 0; display: flex; flex-direction: column; background: #fff; border: 1px solid #6c7280; border-right-color: #aab0c8; padding: 2px 2px 0; }
.org-view { flex: 1; min-height: 0; display: flex; overflow: hidden; }
.tree { flex: 1; min-width: 0; color: #000; white-space: nowrap; overflow: hidden; }
.tree li { display: flex; align-items: center; height: 18px; }
.tree .a { width: 8px; height: 8px; margin-right: 5px; }
.tree .i { width: 16px; height: 16px; margin-right: 3px; }
.tree .sel { background: #0078d7; color: #fff; margin-right: 1px; }
.l1 { padding-left: 9px; } .l2 { padding-left: 28px; } .l3 { padding-left: 47px; } .l4 { padding-left: 66px; }
.vbar { display: flex; flex-direction: column; background: #f5f2f7; flex: none; }
.hbar { display: flex; background: #f5f2f7; flex: none; }
.track { flex: 1; display: block; }
.thumb { display: block; background: #cdcdcd; }
.org-view .thumb { height: 44%; margin-top: 288px; }
.org-box .hbar { height: 16px; margin-right: 16px; }
.org-box .hbar .thumb { width: 75%; height: 100%; }
.org-tabs { height: 30px; border-top: 7px solid #d6dbee; border-bottom: 1px solid #283750; background: #4d6082; display: flex; flex: none; color: #dfe3ee; }
.org-tabs button { padding: 0 6px 0 5px; gap: 2px; }
.org-tabs .on { background: #fff; color: #00539c; }
.desk { flex: 1; min-width: 0; display: flex; flex-direction: column; }
.canvas { flex: 1; }
.out-head { height: 22px; background: #4d6082; color: #fff; display: flex; justify-content: flex-end; align-items: center; gap: 3px; padding-right: 3px; flex: none; }
.out-tools { height: 36px; background: #d6dbee; display: flex; align-items: center; padding: 0 5px 0 189px; gap: 6px; flex: none; }
.warn { border: 1px solid #8490a8; height: 25px; width: 106px; justify-content: flex-end; padding-right: 5px; }
.msgs { border: 1px solid #0078d7; background: #fff3b8; height: 25px; width: 140px; justify-content: space-between; padding: 0 6px; }
.search { margin-left: auto; width: 250px; height: 25px; background: #fff; display: flex; align-items: center; padding: 0 2px; }
.search input { flex: 1; min-width: 0; border: 0; outline: 0; background: none; font: inherit; padding: 0 1px; }
.search input::placeholder { color: #777; opacity: 1; }
.log { height: 96px; background: #fff; display: flex; flex-direction: column; flex: none; }
.log-row { flex: 1; display: flex; }
.log pre { flex: 1; margin: 0; padding: 32px 0 0 208px; font: 12px/15px "Liberation Mono", monospace; color: #000; }
.log .thumb { height: 26px; margin-top: 20px; }
.log-h { height: 16px; background: #f5f2f7; display: flex; justify-content: flex-end; padding-right: 17px; }
.docks { height: 30px; margin: 0 7px; background: #283750; color: #fff; display: flex; gap: 5px; padding-left: 7px; flex: none; }
.docks button { border-bottom: 6px solid #4d6082; gap: 2px; }
.statusbar { height: 27px; margin-left: -1px; background: #0078d0; color: #fff; display: flex; padding: 3px 1px 5px 12px; flex: none; }
.comm { margin-left: auto; }
.lock { margin: -2px 65px 0 187px; }
.float { position: absolute; left: 304px; top: 408px; bottom: 0; width: 224px; background: #fff; border-right: 2px solid #aeb3cf; border-bottom: 4px solid #d0d4e6; display: flex; flex-direction: column; }
.float-view { flex: 1; min-height: 0; display: flex; }
.float-rows { flex: 1; min-width: 0; display: flex; flex-direction: column; overflow: hidden; padding-top: 1px; }
.small { display: flex; flex-direction: column; font-family: Lato, sans-serif; font-size: 9px; line-height: 12px; color: #333; }
.small li { flex: 1; height: auto; min-height: 0; }
.small .a { width: 7px; height: 7px; margin-right: 4px; }
.small .i { width: 11px; height: 11px; margin-right: 3px; }
.small .l1 { padding-left: 3px; } .small .l2 { padding-left: 17px; } .small .l3 { padding-left: 31px; } .small .l4 { padding-left: 45px; } .small .l5 { padding-left: 60px; }
.more { height: 3px; padding-left: 28px; overflow: hidden; flex: none; }
.more .i { width: 11px; height: 11px; }
.float .vbar { width: 12px; }
.float .vbar .thumb { height: 200px; margin-top: 342px; }
.float .hbar { height: 14px; align-items: center; padding-right: 12px; }
.float .hbar .thumb { width: 76%; height: 11px; }
```
